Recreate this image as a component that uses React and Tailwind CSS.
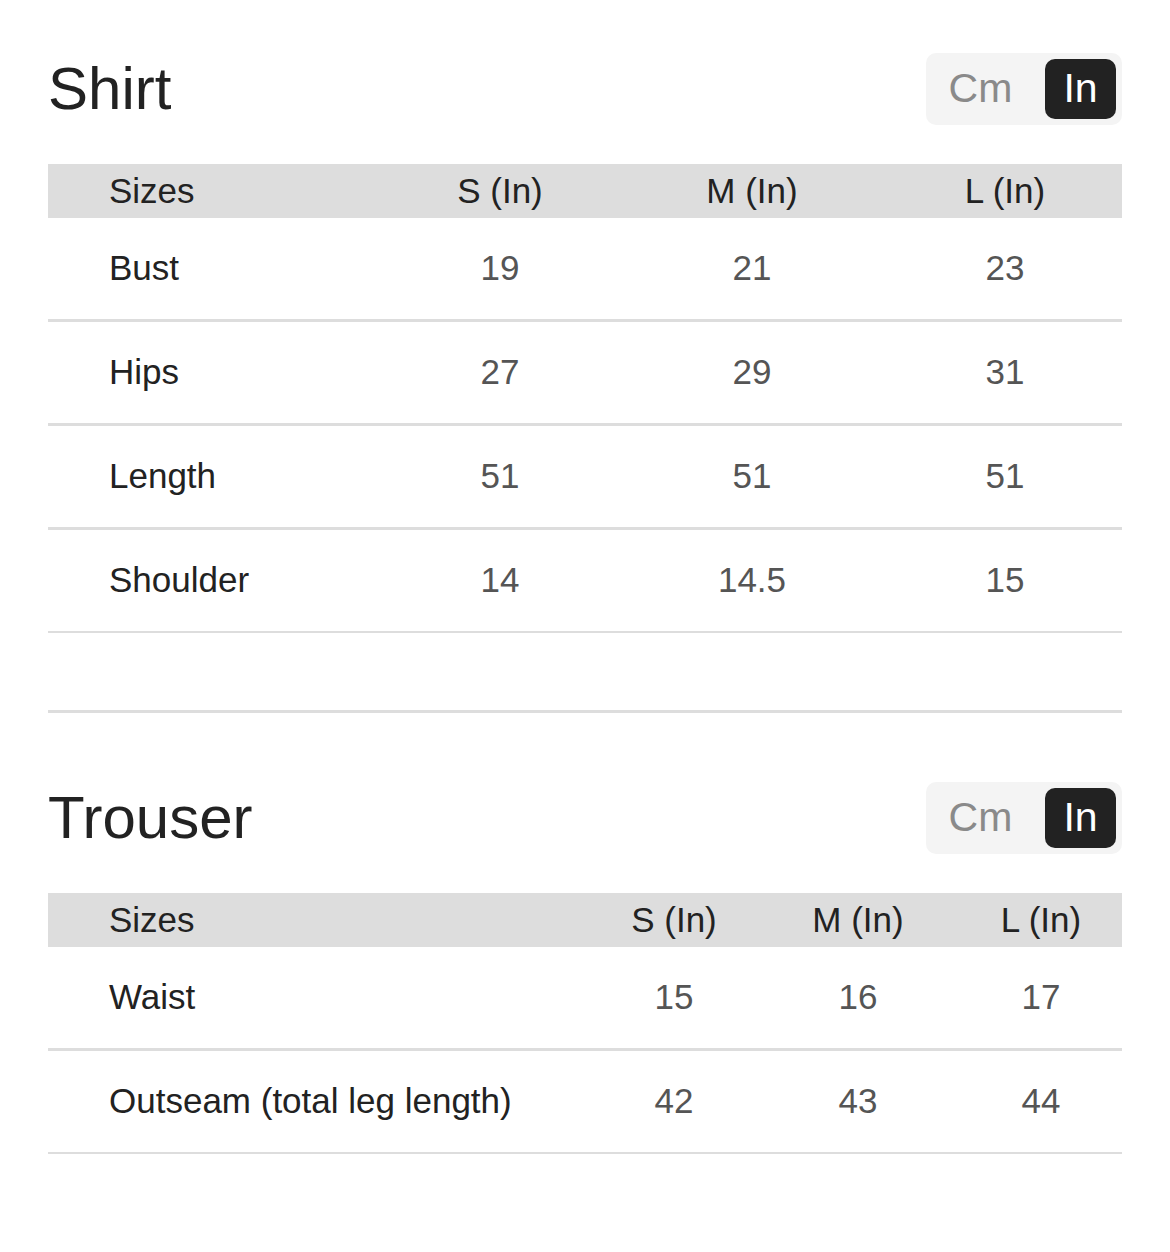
const shirt = {
  title: 'Shirt',
  cols: 'grid-cols-[326px_252px_252px_244px]',
  rows: [
    ['Bust', '19', '21', '23'],
    ['Hips', '27', '29', '31'],
    ['Length', '51', '51', '51'],
    ['Shoulder', '14', '14.5', '15'],
  ],
};

const trouser = {
  title: 'Trouser',
  cols: 'grid-cols-[534px_184px_184px_172px]',
  rows: [
    ['Waist', '15', '16', '17'],
    ['Outseam (total leg length)', '42', '43', '44'],
  ],
};

function UnitToggle() {
  return (
    <div className="flex items-center rounded-[10px] bg-[#f4f4f4] p-[6px]">
      <div className="flex h-[60px] w-[113px] items-center justify-center pr-4 text-[41px] text-[#8a8a8a]">
        Cm
      </div>
      <div className="flex h-[60px] w-[71px] items-center justify-center rounded-[10px] bg-[#222222] text-[41px] text-white">
        In
      </div>
    </div>
  );
}

function SizeTable({ data }) {
  const last = data.rows.length - 1;
  return (
    <div>
      <div className="flex h-[72px] items-center justify-between">
        <h2 className="text-[60px] leading-none text-[#222222]">{data.title}</h2>
        <UnitToggle />
      </div>

      <div className={`mt-[39px] grid h-[54px] items-center bg-[#dddddd] text-[35px] text-[#222222] ${data.cols}`}>
        <div className="pl-[61px]">Sizes</div>
        <div className="text-center">S (In)</div>
        <div className="text-center">M (In)</div>
        <div className="pl-[10px] text-center">L (In)</div>
      </div>

      {data.rows.map((row, i) => (
        <div
          key={row[0]}
          className={`box-content grid h-[101px] items-center border-[#dddddd] text-[35px] ${data.cols} ${
            i === last ? 'border-b-2' : 'border-b-[3px]'
          }`}
        >
          <div className="pl-[61px] text-[#222222]">{row[0]}</div>
          <div className="text-center text-[#555555]">{row[1]}</div>
          <div className="text-center text-[#555555]">{row[2]}</div>
          <div className="pl-[10px] text-center text-[#555555]">{row[3]}</div>
        </div>
      ))}
    </div>
  );
}

export default function App() {
  return (
    <div className="min-h-[1252px] bg-white px-12 pt-[53px] font-['Liberation_Sans',Arial,sans-serif]">
      <SizeTable data={shirt} />
      <div className="mt-[77px] mb-[69px] h-[3px] bg-[#dddddd]" />
      <SizeTable data={trouser} />
    </div>
  );
}
